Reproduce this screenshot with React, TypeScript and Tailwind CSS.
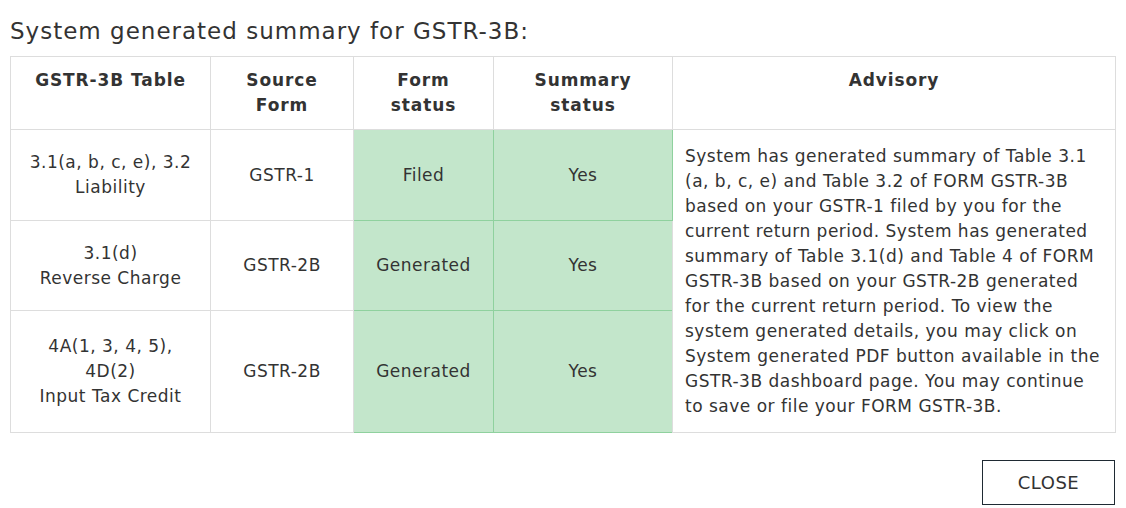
const rows = [
  { table: ["3.1(a, b, c, e), 3.2", "Liability"], source: "GSTR-1", form: "Filed", summary: "Yes", h: "h-[91px]" },
  { table: ["3.1(d)", "Reverse Charge"], source: "GSTR-2B", form: "Generated", summary: "Yes", h: "h-[90px]" },
  { table: ["4A(1, 3, 4, 5),", "4D(2)", "Input Tax Credit"], source: "GSTR-2B", form: "Generated", summary: "Yes", h: "h-[122px]" },
];

// line breaks follow the reference
const advisory = [
  "System has generated summary of Table 3.1",
  "(a, b, c, e) and Table 3.2 of FORM GSTR-3B",
  "based on your GSTR-1 filed by you for the",
  "current return period. System has generated",
  "summary of Table 3.1(d) and Table 4 of FORM",
  "GSTR-3B based on your GSTR-2B generated",
  "for the current return period. To view the",
  "system generated details, you may click on",
  "System generated PDF button available in the",
  "GSTR-3B dashboard page. You may continue",
  "to save or file your FORM GSTR-3B.",
];

export default function App() {
  return (
    <div className="h-[508px] w-[1126px] bg-white px-[10px] text-[#333] [font-family:'DejaVu_Sans',Verdana,sans-serif]">
      <h2 className="pt-[14px] pb-[8px] text-[23px] leading-[34px] font-normal tracking-[1px]">
        System generated summary for GSTR-3B:
      </h2>
      <table className="w-[1105px] table-fixed border-collapse text-[17px] leading-[25px] tracking-[0.5px]">
        <colgroup>
          <col className="w-[200px]" />
          <col className="w-[143px]" />
          <col className="w-[140px]" />
          <col className="w-[179px]" />
          <col className="w-[443px]" />
        </colgroup>
        <thead>
          <tr className="h-[73px] align-top font-bold tracking-[0.9px]">
            <th className="border border-[#ddd] px-3 pt-[11px]">GSTR-3B Table</th>
            <th className="border border-[#ddd] px-3 pt-[11px]">Source Form</th>
            <th className="border border-[#ddd] px-3 pt-[11px]">Form status</th>
            <th className="border border-[#ddd] px-8 pt-[11px]">Summary status</th>
            <th className="border border-[#ddd] px-3 pt-[11px]">Advisory</th>
          </tr>
        </thead>
        <tbody>
          {rows.map((r, i) => (
            <tr key={i} className={`${r.h} text-center align-middle`}>
              <td className="border border-[#ddd] px-2">
                {r.table.map((t) => (
                  <div key={t}>{t}</div>
                ))}
              </td>
              <td className="border border-[#ddd] px-3">{r.source}</td>
              <td className="border border-[#8fd19e] bg-[#c3e6cb] px-3">{r.form}</td>
              <td className="border border-[#8fd19e] bg-[#c3e6cb] px-3">{r.summary}</td>
              {i === 0 && (
                <td rowSpan={3} className="border border-[#ddd] pl-3 pr-1 text-left whitespace-nowrap">
                  {advisory.map((l) => (
                    <div key={l}>{l}</div>
                  ))}
                </td>
              )}
            </tr>
          ))}
        </tbody>
      </table>
      <div className="flex justify-end pt-[27px] pr-[1px]">
        <button className="h-[45px] w-[133px] border border-[#1f2a33] bg-white text-[18px] tracking-[0.5px] text-[#333]">
          CLOSE
        </button>
      </div>
    </div>
  );
}
